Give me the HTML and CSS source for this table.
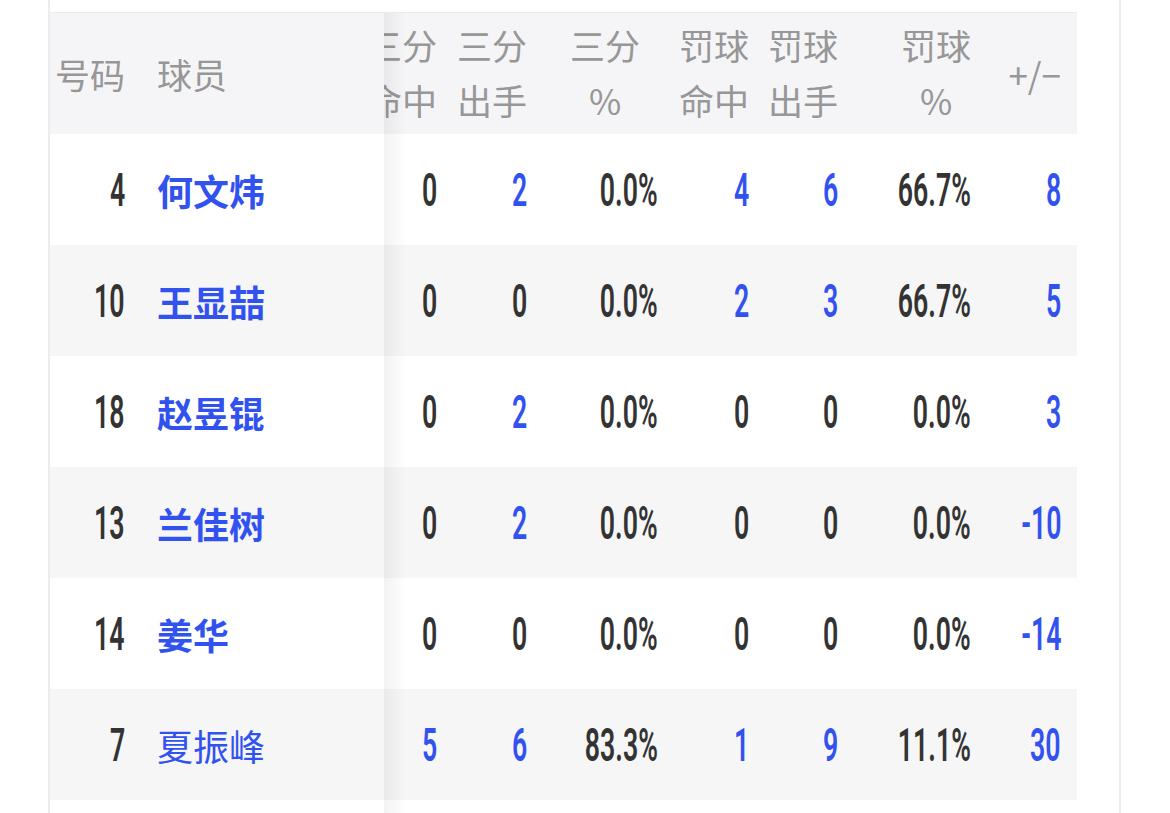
FILE: index.html
```html
<!DOCTYPE html>
<html lang="zh-CN">
<head>
<meta charset="utf-8">
<title>球员数据</title>
<link rel="stylesheet" href="styles.css">
</head>
<body>
<div class="page">
  <div class="board">
    <div class="fixed">
      <div class="row head">
        <div class="c no"><span class="hl">号码</span></div>
        <div class="c name"><span class="hl">球员</span></div>
      </div>
      <div class="row">
        <div class="c no"><span class="num">4</span></div>
        <div class="c name"><a class="player">何文炜</a></div>
      </div>
      <div class="row alt">
        <div class="c no"><span class="num">10</span></div>
        <div class="c name"><a class="player">王显喆</a></div>
      </div>
      <div class="row">
        <div class="c no"><span class="num">18</span></div>
        <div class="c name"><a class="player">赵昱锟</a></div>
      </div>
      <div class="row alt">
        <div class="c no"><span class="num">13</span></div>
        <div class="c name"><a class="player">兰佳树</a></div>
      </div>
      <div class="row">
        <div class="c no"><span class="num">14</span></div>
        <div class="c name"><a class="player">姜华</a></div>
      </div>
      <div class="row alt">
        <div class="c no"><span class="num">7</span></div>
        <div class="c name"><a class="player light">夏振峰</a></div>
      </div>
      <div class="row">
        <div class="c no"></div>
        <div class="c name"></div>
      </div>
    </div>
    <div class="scroll">
      <div class="inner">
        <div class="row head">
          <div class="c"><span class="hl2">三分<br>命中</span></div>
          <div class="c"><span class="hl2">三分<br>出手</span></div>
          <div class="c pct3"><span class="hl2">三分<br>%</span></div>
          <div class="c"><span class="hl2">罚球<br>命中</span></div>
          <div class="c"><span class="hl2">罚球<br>出手</span></div>
          <div class="c"><span class="hl2">罚球<br>%</span></div>
          <div class="c"><span class="hl">+/−</span></div>
        </div>
        <div class="row">
          <div class="c"><span class="num">0</span></div>
          <div class="c"><span class="num blue">2</span></div>
          <div class="c"><span class="num">0.0%</span></div>
          <div class="c"><span class="num blue">4</span></div>
          <div class="c"><span class="num blue">6</span></div>
          <div class="c"><span class="num">66.7%</span></div>
          <div class="c"><span class="num blue">8</span></div>
        </div>
        <div class="row alt">
          <div class="c"><span class="num">0</span></div>
          <div class="c"><span class="num">0</span></div>
          <div class="c"><span class="num">0.0%</span></div>
          <div class="c"><span class="num blue">2</span></div>
          <div class="c"><span class="num blue">3</span></div>
          <div class="c"><span class="num">66.7%</span></div>
          <div class="c"><span class="num blue">5</span></div>
        </div>
        <div class="row">
          <div class="c"><span class="num">0</span></div>
          <div class="c"><span class="num blue">2</span></div>
          <div class="c"><span class="num">0.0%</span></div>
          <div class="c"><span class="num">0</span></div>
          <div class="c"><span class="num">0</span></div>
          <div class="c"><span class="num">0.0%</span></div>
          <div class="c"><span class="num blue">3</span></div>
        </div>
        <div class="row alt">
          <div class="c"><span class="num">0</span></div>
          <div class="c"><span class="num blue">2</span></div>
          <div class="c"><span class="num">0.0%</span></div>
          <div class="c"><span class="num">0</span></div>
          <div class="c"><span class="num">0</span></div>
          <div class="c"><span class="num">0.0%</span></div>
          <div class="c"><span class="num blue">-10</span></div>
        </div>
        <div class="row">
          <div class="c"><span class="num">0</span></div>
          <div class="c"><span class="num">0</span></div>
          <div class="c"><span class="num">0.0%</span></div>
          <div class="c"><span class="num">0</span></div>
          <div class="c"><span class="num">0</span></div>
          <div class="c"><span class="num">0.0%</span></div>
          <div class="c"><span class="num blue">-14</span></div>
        </div>
        <div class="row alt">
          <div class="c"><span class="num blue">5</span></div>
          <div class="c"><span class="num blue">6</span></div>
          <div class="c"><span class="num">83.3%</span></div>
          <div class="c"><span class="num blue">1</span></div>
          <div class="c"><span class="num blue">9</span></div>
          <div class="c"><span class="num">11.1%</span></div>
          <div class="c"><span class="num blue">30</span></div>
        </div>
        <div class="row">
          <div class="c"></div>
          <div class="c"></div>
          <div class="c"></div>
          <div class="c"></div>
          <div class="c"></div>
          <div class="c"></div>
          <div class="c"></div>
        </div>
      </div>
    </div>
  </div>
</div>
</body>
</html>
```

FILE: styles.css
```css
html, body {
  margin: 0;
  padding: 0;
  background: #ffffff;
}

body {
  font-family: "Noto Sans CJK SC", "Noto Sans", sans-serif;
  overflow: hidden;
  height: 813px;
}

.page {
  margin-left: 48px;
  width: 1069px;
  border-left: 2px solid #ececec;
  border-right: 2px solid #ececec;
  padding-top: 12px;
  min-height: 813px;
  box-sizing: content-box;
}

.board {
  display: flex;
  width: 1027px;
  border-top: 1px solid #ebebed;
}

.fixed {
  width: 334px;
  flex: none;
  position: relative;
  z-index: 1;
}

.fixed::after {
  content: "";
  position: absolute;
  top: 0;
  bottom: 0;
  left: 100%;
  width: 22px;
  background: linear-gradient(to right, rgba(0, 0, 0, 0.05), rgba(0, 0, 0, 0));
  pointer-events: none;
}

.scroll {
  flex: 1;
  overflow: hidden;
}

.inner {
  margin-left: -21px;
  width: 714px;
}

.row {
  display: grid;
  height: 111px;
  background: #ffffff;
}

.row.alt {
  background: #f6f6f6;
}

.row.head {
  height: 121px;
  background: #f5f5f7;
}

.fixed .row {
  grid-template-columns: 91px 243px;
}

.inner .row {
  grid-template-columns: 90px 90px 131px 91px 89px 133px 90px;
}

.c {
  display: flex;
  align-items: center;
  justify-content: flex-end;
  padding-right: 16px;
  min-width: 0;
  white-space: nowrap;
}

.c.name {
  justify-content: flex-start;
  padding-right: 0;
  padding-left: 16px;
}

.c.pct3 {
  padding-right: 34px;
}

.hl {
  font-size: 35px;
  line-height: 1;
  color: #979797;
  font-weight: 400;
}

.hl2 {
  display: block;
  width: 70px;
  text-align: center;
  font-size: 35px;
  line-height: 55px;
  color: #979797;
  font-weight: 400;
  margin-top: -4px;
}

.num {
  display: inline-block;
  font-family: Roboto, "Liberation Sans", sans-serif;
  font-weight: 600;
  font-size: 46px;
  line-height: 1;
  color: #333333;
  transform: scaleX(0.58);
  transform-origin: right center;
}

.num.blue {
  color: #3252f0;
}

.player {
  font-size: 36px;
  font-weight: 700;
  line-height: 1;
  color: #3252f0;
  text-decoration: none;
}

.player.light {
  font-weight: 400;
}
```
